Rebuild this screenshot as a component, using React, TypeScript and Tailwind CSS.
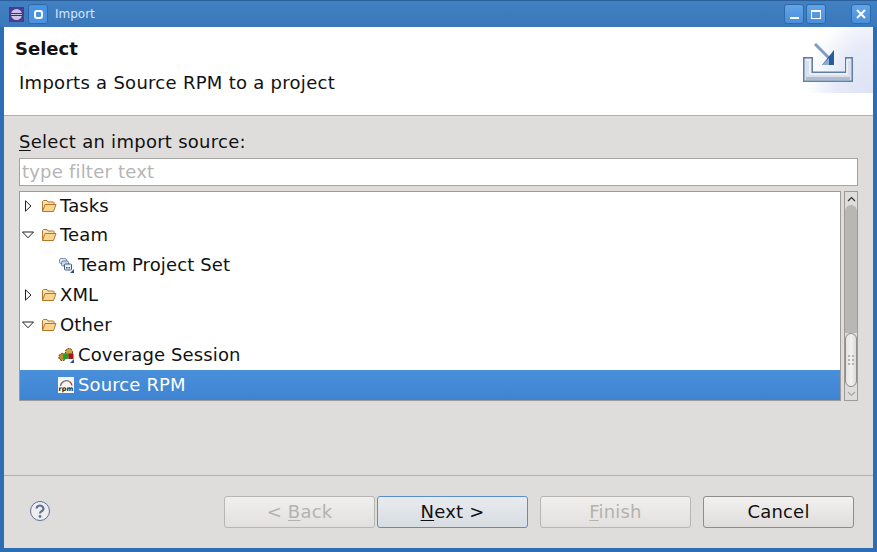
const font = { fontFamily: '"DejaVu Sans", sans-serif' };

function Folder() {
  return (
    <svg width="16" height="14" viewBox="0 0 16 14" className="shrink-0">
      <path d="M1.5 12.5V2.5l1-1h3.5l1 1.5h5.5l.5.5v2" fill="#f6e2b4" stroke="#b5752b" />
      <path d="M1.5 12.5l2.5-7h11l-2.5 7z" fill="#f9d58f" stroke="#b5752b" strokeLinejoin="round" />
    </svg>
  );
}

function Arrow({ open }: { open?: boolean }) {
  return (
    <svg width="12" height="12" viewBox="0 0 12 12" className="shrink-0">
      {open ? (
        <path d="M.5 3h11L6 8.8z" fill="#fff" stroke="#222" strokeWidth="1" />
      ) : (
        <path d="M3.5 .8v10.4L9 6z" fill="#fff" stroke="#222" strokeWidth="1" />
      )}
    </svg>
  );
}

function TeamIcon() {
  return (
    <svg width="16" height="16" viewBox="0 0 16 16" className="shrink-0">
      <rect x="1.5" y="1.5" width="7" height="5" rx="1.5" fill="#dfe8f2" stroke="#7d97b5" />
      <rect x="3.5" y="4" width="7" height="5" rx="1.5" fill="#c9d8ea" stroke="#5f7fa5" />
      <rect x="6.5" y="7" width="7" height="6" rx="1" fill="#e8eef6" stroke="#44597a" />
      <rect x="8" y="10" width="1.5" height="1.5" fill="#44597a" />
      <rect x="10.5" y="10" width="1.5" height="1.5" fill="#44597a" />
      <path d="M12 16l4-4v4z" fill="#1d4f91" />
    </svg>
  );
}

function CoverageIcon() {
  return (
    <svg width="18" height="17" viewBox="0 0 18 17" className="shrink-0">
      <circle cx="11" cy="5" r="3.6" fill="#d0a23c" stroke="#5c3d0e" strokeDasharray="2 1" />
      <circle cx="4.5" cy="10" r="3.6" fill="#c0902f" stroke="#5c3d0e" strokeDasharray="2 1" />
      <rect x="5" y="6.5" width="5.5" height="5.5" fill="#27a02f" />
      <rect x="10.5" y="6.5" width="5" height="5.5" fill="#a8161b" />
      <path d="M12 16l4-4v4z" fill="#1d4f91" />
    </svg>
  );
}

function RpmIcon() {
  return (
    <svg width="16" height="16" viewBox="0 0 16 16" className="shrink-0">
      <rect width="16" height="16" fill="#f6f6f6" />
      <path d="M2.5 9a6 6 0 0 1 9-4.5" fill="none" stroke="#777" strokeWidth="1.4" />
      <path d="M11.5 4.5a6 6 0 0 1 2.5 4" fill="none" stroke="#b33" strokeWidth="1.4" />
      <text x="8" y="13.5" textAnchor="middle" fontSize="6.5" fontWeight="700" fill="#222" fontFamily="'DejaVu Sans', sans-serif">rpm</text>
    </svg>
  );
}

function BannerIcon() {
  return (
    <div className="w-[73px] h-[66px] bg-[radial-gradient(ellipse_90%_130%_at_100%_100%,#dde3f4_0%,#e6eaf8_55%,#ffffff_100%)] shrink-0 flex items-start pl-[3px] pt-[16px]">
      <svg width="50" height="40" viewBox="0 0 50 40">
        <path d="M.75 14.75h8.5v14.5h33.5v-14.5h6.5v23.5h-48.5z" fill="#d9e0ec" stroke="#5f7fa8" strokeWidth="1.5" />
        <path d="M3 35.5h44" stroke="#aebdd3" strokeWidth="3" />
        <path d="M3 17h4v14h37v-14h3" fill="none" stroke="#f2f4f8" strokeWidth="1.5" />
        <path d="M12 1l14 14" stroke="#7f9cc4" strokeWidth="3" />
        <path d="M31 7v15h-12z" fill="#2a5c9b" />
        <path d="M26 15v7h-7z" fill="#8eabd0" />
      </svg>
    </div>
  );
}

function WinBtn({ children, className }: { children: React.ReactNode; className?: string }) {
  return (
    <div className={`w-[20px] h-[20px] rounded-[3px] border border-[#2f6aa8] bg-[linear-gradient(#62a4e6,#4a8fdc)] flex items-center justify-center ${className ?? ''}`}>
      {children}
    </div>
  );
}

function Row({ indent, arrow, icon, label, selected, h = 'h-[30px]' }: { indent?: boolean; arrow?: 'open' | 'closed'; icon: React.ReactNode; label: string; selected?: boolean; h?: string }) {
  return (
    <div className={`${h} flex items-center shrink-0 tracking-[0.12px] ${selected ? 'bg-[linear-gradient(#4a8fda,#3f84d2)] text-white' : 'text-[#111]'}`}>
      <div className="w-[21px] shrink-0 pl-[2px] flex items-center">{arrow && <Arrow open={arrow === 'open'} />}</div>
      <div className={`flex items-center ${indent ? 'pl-[17px]' : ''}`}>
        <div className="w-[20px] flex items-center">{icon}</div>
        <span className={indent ? '' : '-ml-[1px]'}>{label}</span>
      </div>
    </div>
  );
}

function Button({ children, disabled, focus, className }: { children: React.ReactNode; disabled?: boolean; focus?: boolean; className?: string }) {
  const cls = disabled
    ? 'border-[#b8b6b3] text-[#b4b2ae] bg-[linear-gradient(#f0efee,#e2e0de)]'
    : focus
      ? 'border-[#5b8ec7] text-[#111] bg-[linear-gradient(#e8ebee,#d8dde2)]'
      : 'border-[#8f8d8a] text-[#111] bg-[linear-gradient(#f2f1f0,#dfdddb)]';
  return (
    <div className={`w-[151px] h-[32px] rounded-[3px] border flex items-center justify-center tracking-[0.2px] ${cls} ${className ?? ''}`}>
      {children}
    </div>
  );
}

export default function App() {
  return (
    <div style={font} className="w-[877px] h-[552px] flex flex-col bg-[#2d6db3] text-[18px] leading-none overflow-hidden">
      {/* title bar */}
      <div className="h-[27px] shrink-0 flex items-center bg-[linear-gradient(#4180c2,#3a78ba)] border-t border-[#2a5f9c] pl-[9px] pr-[6px]">
        <svg width="15" height="15" viewBox="0 0 15 15" className="shrink-0">
          <rect width="15" height="15" fill="#4b3a94" />
          <circle cx="7.5" cy="7.5" r="5.5" fill="#c9c3e6" />
          <rect x="2" y="6" width="11" height="1" fill="#3a2c7e" />
          <rect x="2" y="8" width="11" height="1" fill="#3a2c7e" />
        </svg>
        <div className="ml-[4px] w-[20px] h-[20px] rounded-[3px] border border-[#2f6aa8] bg-[#4b93e0] flex items-center justify-center">
          <div className="w-[9px] h-[9px] rounded-[3px] border-[2.5px] border-white" />
        </div>
        <span className="ml-[7px] text-[12px] text-[#d8e6f5]">Import</span>
        <div className="flex-1" />
        <WinBtn>
          <div className="w-[9px] h-[2px] bg-white mt-[8px]" />
        </WinBtn>
        <WinBtn className="ml-[2px]">
          <div className="w-[10px] h-[9px] border border-white border-t-2" />
        </WinBtn>
        <WinBtn className="ml-[25px]">
          <svg width="10" height="10" viewBox="0 0 10 10">
            <path d="M1 1l8 8M9 1l-8 8" stroke="#fff" strokeWidth="2" />
          </svg>
        </WinBtn>
      </div>

      {/* body */}
      <div className="flex-1 mx-[4px] mb-[4px] bg-[#dfdddb] flex flex-col min-h-0">
        {/* header */}
        <div className="h-[89px] shrink-0 bg-white border-b border-[#b3b1ae] flex justify-between items-start">
          <div className="pl-[11px] pt-[13px]">
            <div className="font-bold text-[#111] text-[18px] leading-[18px]">Select</div>
            <div className="pl-[4px] mt-[15px] text-[#111] text-[18px] leading-[20px] tracking-[0.28px]">Imports a Source RPM to a project</div>
          </div>
          <BannerIcon />
        </div>

        {/* main */}
        <div className="flex-1 flex flex-col px-[15px] min-h-0">
          <div className="mt-[15px] h-[22px] flex items-center text-[#111] tracking-[0.27px]">
            <span><span className="underline underline-offset-2">S</span>elect an import source:</span>
          </div>
          <div className="mt-[5px] h-[28px] border border-[#a5a3a0] bg-white flex items-center pl-[2px] text-[#b5b5b5] tracking-[0.2px]">type filter text</div>
          <div className="mt-[5px] h-[210px] flex gap-[3px] pr-0">
            <div className="flex-1 border border-[#9d9b98] bg-white flex flex-col overflow-hidden">
              <Row arrow="closed" icon={<Folder />} label="Tasks" h="h-[28px]" />
              <Row arrow="open" icon={<Folder />} label="Team" />
              <Row indent icon={<TeamIcon />} label="Team Project Set" />
              <Row arrow="closed" icon={<Folder />} label="XML" />
              <Row arrow="open" icon={<Folder />} label="Other" />
              <Row indent icon={<CoverageIcon />} label="Coverage Session" />
              <Row indent icon={<RpmIcon />} label="Source RPM" selected />
            </div>
            {/* scrollbar */}
            <div className="w-[14px] shrink-0 border border-[#9d9b98] bg-[#dfdddb] flex flex-col items-center">
              <div className="h-[13px] w-full flex items-center justify-center">
                <svg width="9" height="6" viewBox="0 0 9 6"><path d="M1 5l3.5-3.5L8 5" fill="none" stroke="#333" strokeWidth="1.2" /></svg>
              </div>
              <div className="w-full h-[128px] bg-[#b9b7b4] rounded-t-[6px]" />
              <div className="w-full h-[54px] rounded-[6px] border border-[#8f8d8a] bg-[linear-gradient(90deg,#e4e3e1,#f2f1f0,#dcdbd9)] flex flex-col items-center justify-center gap-[2px]">
                <div className="w-[6px] h-[2px] border-x-2 border-[#b5b3b0]" />
                <div className="w-[6px] h-[2px] border-x-2 border-[#b5b3b0]" />
                <div className="w-[6px] h-[2px] border-x-2 border-[#b5b3b0]" />
              </div>
              <div className="flex-1 w-full flex items-center justify-center">
                <svg width="9" height="6" viewBox="0 0 9 6"><path d="M1 1l3.5 3.5L8 1" fill="none" stroke="#a8a6a3" strokeWidth="1.2" /></svg>
              </div>
            </div>
          </div>
        </div>

        {/* footer */}
        <div className="h-[73px] shrink-0 border-t border-[#b3b1ae] flex items-start pt-[20px] pl-[25px] pr-[19px]">
          <svg width="22" height="22" viewBox="0 0 22 22" className="shrink-0 mt-[4px]">
            <circle cx="11" cy="11" r="9.5" fill="#eeeef0" stroke="#5d7296" strokeWidth="1" />
            <path d="M7.5 8.5a3.5 3 0 1 1 5.5 2.5c-1.2.8-2 1.2-2 2.5" fill="none" stroke="#5d7296" strokeWidth="2.2" />
            <circle cx="11" cy="16.5" r="1.4" fill="#5d7296" />
          </svg>
          <div className="flex-1" />
          <Button disabled>
            <span>&lt; <span className="underline underline-offset-2">B</span>ack</span>
          </Button>
          <Button focus className="ml-[2px]">
            <span><span className="underline underline-offset-2">N</span>ext &gt;</span>
          </Button>
          <Button disabled className="ml-[12px]">
            <span><span className="underline underline-offset-2">F</span>inish</span>
          </Button>
          <Button className="ml-[12px]">Cancel</Button>
        </div>
      </div>
    </div>
  );
}
